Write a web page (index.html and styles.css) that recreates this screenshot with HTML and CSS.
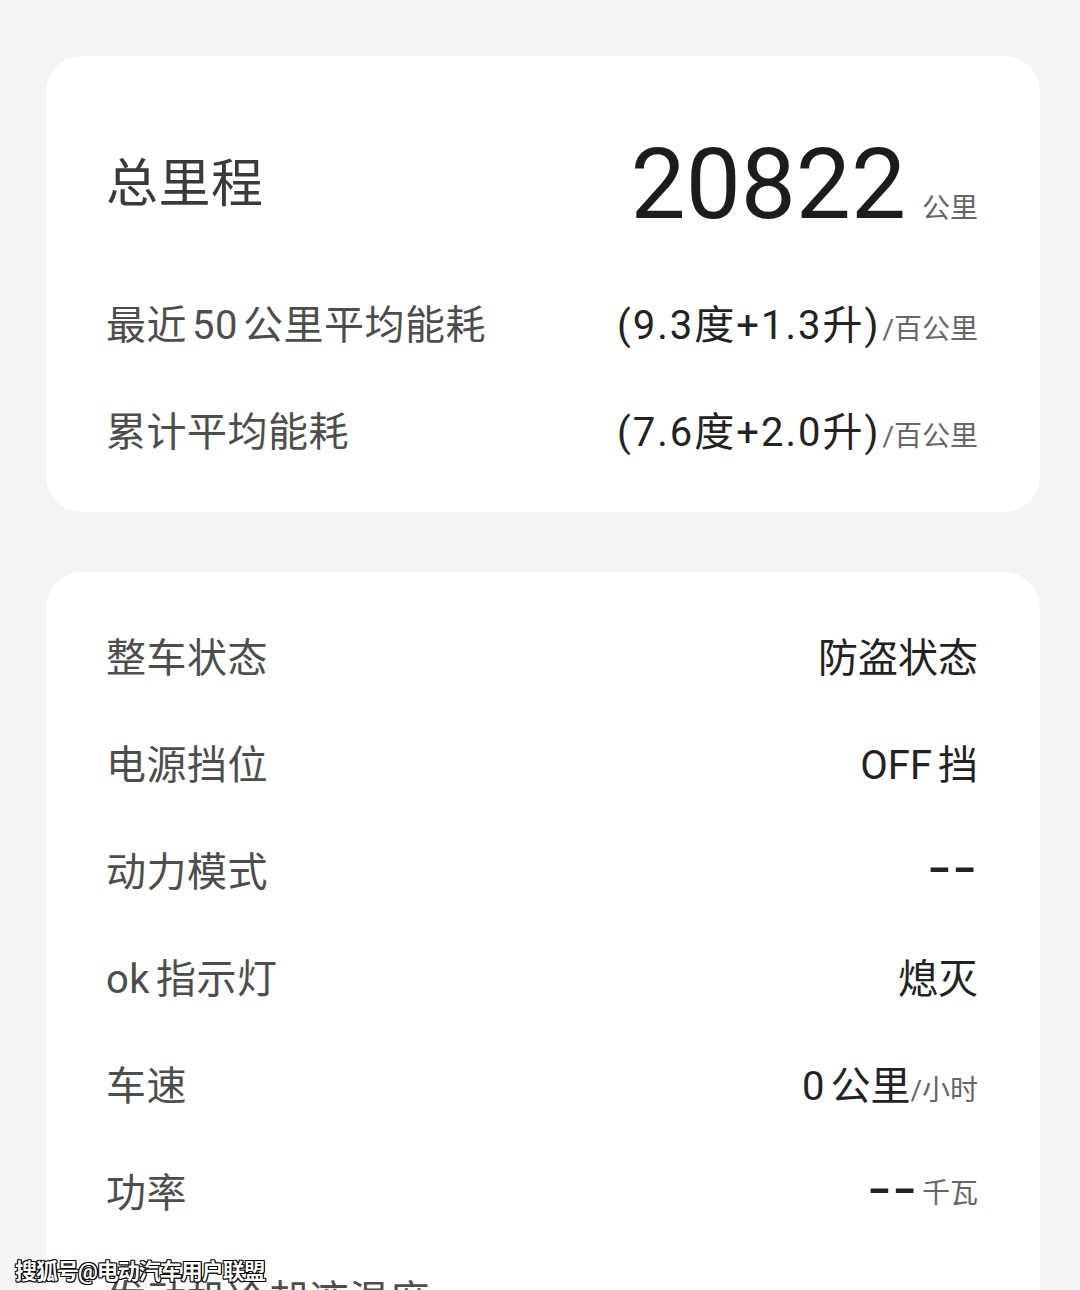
FILE: index.html
```html
<!DOCTYPE html>
<html lang="zh-CN">
<head>
  <meta charset="UTF-8" />
  <meta name="viewport" content="width=device-width, initial-scale=1.0"/>
  <title>车辆状态</title>
  <link rel="stylesheet" href="styles.css">
</head>
<body>
  <div class="page">
    <section class="card card-mileage">
      <div class="row row-total">
        <span class="label label-big">总里程</span>
        <span class="value value-total"><span class="big-num">20822</span><span class="unit unit-km">公里</span></span>
      </div>
      <div class="row">
        <span class="label">最近<span class="num">50</span>公里平均能耗</span>
        <span class="value spaced">(9.3度+1.3升)<span class="unit">/百公里</span></span>
      </div>
      <div class="row">
        <span class="label">累计平均能耗</span>
        <span class="value spaced">(7.6度+2.0升)<span class="unit">/百公里</span></span>
      </div>
    </section>

    <section class="card card-status">
      <div class="row">
        <span class="label">整车状态</span>
        <span class="value">防盗状态</span>
      </div>
      <div class="row">
        <span class="label">电源挡位</span>
        <span class="value">OFF<span class="gap">挡</span></span>
      </div>
      <div class="row">
        <span class="label">动力模式</span>
        <span class="value"><span class="dash">--</span></span>
      </div>
      <div class="row">
        <span class="label">ok<span class="gap">指示灯</span></span>
        <span class="value">熄灭</span>
      </div>
      <div class="row">
        <span class="label">车速</span>
        <span class="value">0<span class="gap">公里</span><span class="unit">/小时</span></span>
      </div>
      <div class="row">
        <span class="label">功率</span>
        <span class="value"><span class="dash">--</span><span class="unit unit-kw">千瓦</span></span>
      </div>
      <div class="row">
        <span class="label">发动机冷却液温度</span>
        <span class="value"></span>
      </div>
    </section>
  </div>

  <div class="watermark">搜狐号@电动汽车用户联盟</div>
</body>
</html>
```

FILE: styles.css
```css
html, body {
  margin: 0;
  padding: 0;
  background: #f3f4f6;
  height: 1290px;
  overflow: hidden;
}
body {
  font-family: Roboto, "Noto Sans CJK SC", sans-serif;
  color: #222;
}
.page {
  padding: 56px 40px 0 46px;
  display: flex;
  flex-direction: column;
  gap: 60px;
}
.card {
  background: #fff;
  border-radius: 36px;
  padding: 0 62px 0 60px;
}
.card-mileage {
  padding-top: 34px;
  padding-bottom: 30px;
}
.card-status {
  padding-top: 29px;
  padding-bottom: 40px;
}
.row {
  height: 107px;
  display: flex;
  align-items: center;
  justify-content: space-between;
}
.row-total {
  height: 178px;
}
.label {
  font-size: 40px;
  color: #4d4d4d;
  letter-spacing: 0.5px;
}
.label-big {
  font-size: 52px;
  color: #3a3a3a;
}
.num {
  margin: 0 5px;
}
.gap {
  margin-left: 6px;
}
.value {
  font-size: 40px;
  color: #222;
  display: flex;
  align-items: baseline;
}
.value-total {
  padding-top: 12px;
}
.spaced {
  letter-spacing: 2px;
}
.spaced .unit {
  letter-spacing: 0;
  margin-left: 2px;
}
.dash {
  display: inline-block;
  font-weight: 700;
  transform: scaleX(1.6);
  transform-origin: right center;
}
.big-num {
  font-size: 98px;
  font-weight: 400;
  color: #1c1c1c;
  line-height: 1;
}
.unit {
  font-size: 28px;
  color: #666;
}
.unit-km {
  margin-left: 16px;
}
.unit-kw {
  margin-left: 4px;
}
.watermark {
  position: absolute;
  left: 15px;
  top: 1253px;
  font-size: 22px;
  font-weight: bold;
  color: #fff;
  letter-spacing: -1px;
  text-shadow: 1px 1px 0 #000, -1px -1px 0 #000, 1px -1px 0 #000, -1px 1px 0 #000, 0 1px 0 #000, 1px 0 0 #000;
}
```
